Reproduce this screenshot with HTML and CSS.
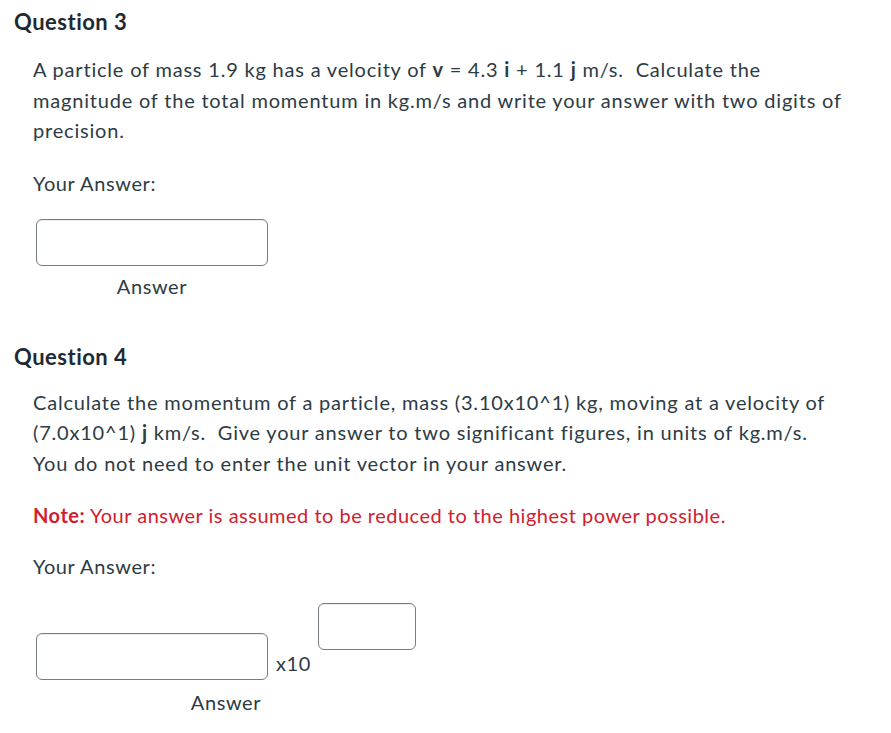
FILE: index.html
```html
<!DOCTYPE html>
<html>
<head>
<meta charset="utf-8">
<link rel="stylesheet" href="styles.css">
</head>
<body>
<div class="page">
  <section class="question">
    <h2 class="q-title">Question 3</h2>
    <div class="q-body">
      <p class="text">A particle of mass 1.9 kg has a velocity of <b>v</b> = 4.3 <b>i</b> + 1.1 <b>j</b> m/s.&nbsp; Calculate the magnitude of the total momentum in kg.m/s and write your answer with two digits of precision.</p>
      <p class="your">Your Answer:</p>
      <div class="answer-group single">
        <div class="answer-row">
          <div class="input"></div>
        </div>
        <div class="answer-label">Answer</div>
      </div>
    </div>
  </section>
  <section class="question q4">
    <h2 class="q-title">Question 4</h2>
    <div class="q-body">
      <p class="text">Calculate the momentum of a particle, mass (3.10x10^1) kg, moving at a velocity of (7.0x10^1) <b>j</b> km/s.&nbsp; Give your answer to two significant figures, in units of kg.m/s.&nbsp; You do not need to enter the unit vector in your answer.</p>
      <p class="note"><b>Note:</b> Your answer is assumed to be reduced to the highest power possible.</p>
      <p class="your">Your Answer:</p>
      <div class="answer-group">
        <div class="answer-row">
          <div class="input"></div>
          <span class="x10">x10</span>
          <div class="input small"></div>
        </div>
        <div class="answer-label">Answer</div>
      </div>
    </div>
  </section>
</div>
</body>
</html>
```
FILE: styles.css
```css
html, body {
  margin: 0;
  padding: 0;
  background: #ffffff;
}
body {
  font-family: Lato, "Liberation Sans", sans-serif;
  color: #2d3b45;
}
.page {
  padding: 8px 0 0 14px;
}
.q-title {
  margin: 0;
  font-size: 22px;
  font-weight: 700;
  line-height: 28px;
  letter-spacing: 0.5px;
  color: #1e2a33;
}
.q-body {
  padding-left: 19px;
}
.text {
  margin: 18px 0 0 0;
  font-size: 20px;
  line-height: 30.5px;
  letter-spacing: 0.8px;
  width: 816px;
}
.q4 .text {
  margin-top: 16px;
}
.text b {
  font-weight: 700;
}
.note {
  margin: 22px 0 0 0;
  font-size: 20px;
  line-height: 30px;
  letter-spacing: 0.5px;
  color: #d0202e;
}
.your {
  margin: 22px 0 0 0;
  font-size: 20px;
  line-height: 30px;
  letter-spacing: 0.6px;
}
.q4 .your {
  margin-top: 21px;
}
.answer-group {
  display: inline-flex;
  flex-direction: column;
  align-items: center;
  margin-top: 21px;
  margin-left: 3px;
}
.answer-row {
  display: flex;
  align-items: flex-end;
}
.input {
  width: 230px;
  height: 45px;
  border: 1px solid #757d83;
  border-radius: 6px;
  box-shadow: inset 0 1px 1px rgba(0,0,0,0.08);
}
.input.small {
  width: 96px;
  margin-bottom: 30px;
  margin-left: 7px;
}
.x10 {
  font-size: 20px;
  line-height: 24px;
  letter-spacing: 0.6px;
  margin-left: 8px;
  margin-bottom: 5px;
}
.answer-label {
  font-size: 20px;
  line-height: 28px;
  letter-spacing: 0.6px;
  margin-top: 6px;
}
.q4 {
  margin-top: 43px;
}
.q4 .answer-group {
  margin-top: 22px;
}
.q4 .answer-label {
  margin-top: 8px;
}
```
